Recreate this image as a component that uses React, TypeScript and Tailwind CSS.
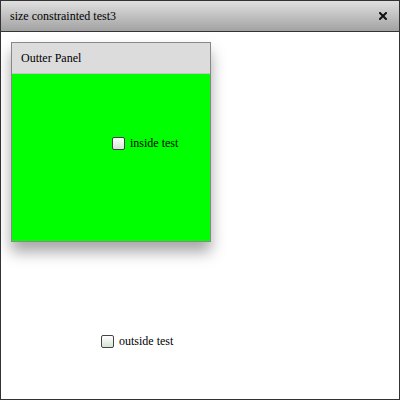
import React from "react";

function Check({ label }: { label: string }) {
  return (
    <div className="flex items-center gap-[5px]">
      <div className="w-[13px] h-[13px] border border-[#444] rounded-[2px] bg-gradient-to-b from-[#ffffff] to-[#d4e4d4] shadow-[inset_0_1px_1px_rgba(255,255,255,0.8)]" />
      <span className="text-[12px] leading-[15px] text-black">{label}</span>
    </div>
  );
}

export default function App() {
  return (
    <div
      className="w-[400px] h-[400px] border border-[#333] bg-white flex flex-col overflow-hidden"
      style={{ fontFamily: '"Liberation Serif", "Times New Roman", serif' }}
    >
      <div className="h-[31px] shrink-0 border-b border-[#333] bg-gradient-to-b from-[#e0e0e0] to-[#a2a2a2] flex items-center justify-between pl-[9px] pr-[12px]">
        <span className="text-[12px] text-black">size constrainted test3</span>
        <svg width="8" height="8" viewBox="0 0 8 8">
          <path d="M1 1 L7 7 M7 1 L1 7" stroke="#111" strokeWidth="2" strokeLinecap="square" />
        </svg>
      </div>
      <div className="flex-1 pt-[10px] pl-[10px] flex flex-col">
        <div className="w-[200px] h-[200px] border border-[#888] flex flex-col shadow-[0_10px_14px_rgba(0,0,0,0.35)]">
          <div className="h-[31px] shrink-0 bg-[#dcdcdc] border-b border-[#c4c4c4] flex items-center pl-[9px]">
            <span className="text-[12px] text-black">Outter Panel</span>
          </div>
          <div className="flex-1 bg-[#00ff00] pl-[100px] pt-[62px]">
            <Check label="inside test" />
          </div>
        </div>
        <div className="pl-[90px] mt-[92px]">
          <Check label="outside test" />
        </div>
      </div>
    </div>
  );
}
